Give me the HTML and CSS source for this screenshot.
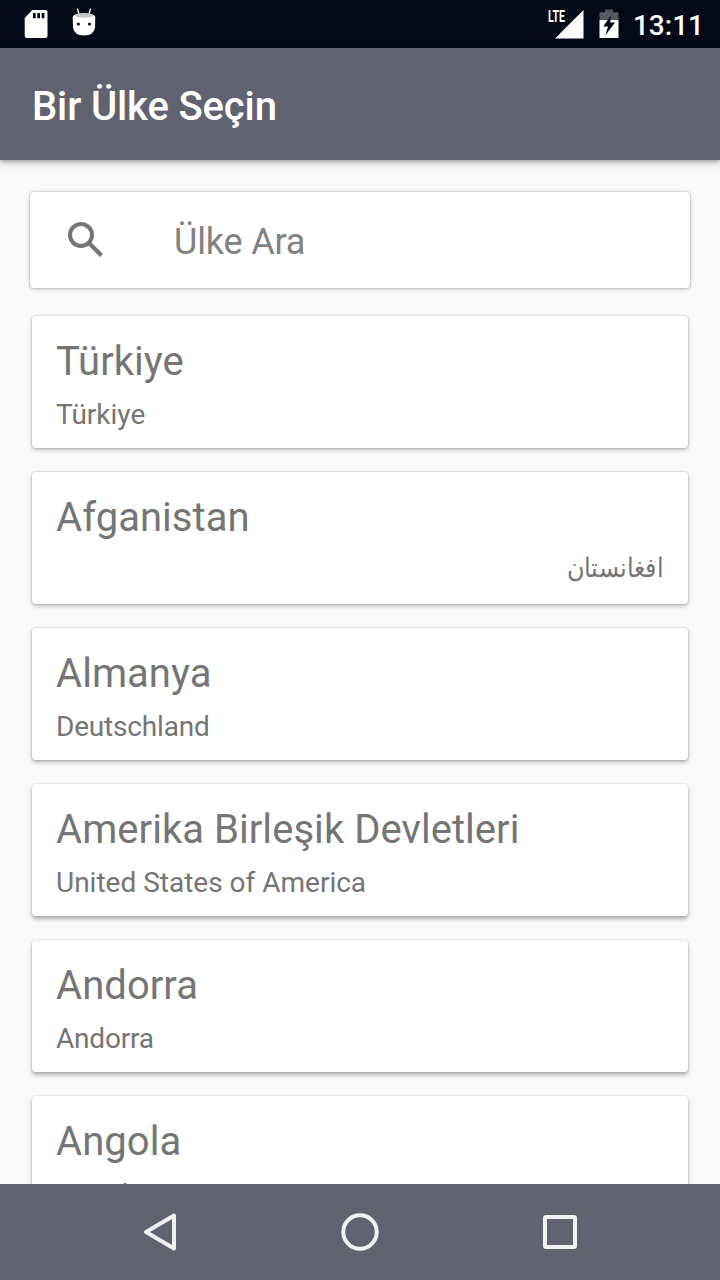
FILE: index.html
```html
<!DOCTYPE html>
<html lang="tr">
<head>
<meta charset="utf-8">
<title>Bir Ülke Seçin</title>
<link rel="stylesheet" href="styles.css">
</head>
<body>
<div class="screen">
  <div class="status">
    <svg class="sd" width="24" height="28" viewBox="0 0 24 28"><path fill="#fff" fill-rule="evenodd" d="M8.3 0H21.5a2 2 0 0 1 2 2V26a2 2 0 0 1-2 2H2.700a2 2 0 0 1-2-2V8ZM9 3V8.300h2.700V3ZM13.300 3V8.300H16V3ZM17.700 3V8.300h2.700V3Z"/></svg>
    <svg class="droid" width="24" height="28" viewBox="0 0 24 28"><path d="M5.500 1 7 6M18.500 1 17 6" stroke="#fff" stroke-width="1.300" stroke-linecap="round"/><path d="M.7 9Q1 5.500 12 5.500T23.300 9L23 20Q21.500 27.500 12 27.500T1 20Z" fill="#fff"/><path d="M2.500 7Q5 5 12 5T21.500 7Q20 9.700 12 9.700T2.500 7Z" fill="#c4c4c6"/><circle cx="6.400" cy="16" r="1.500" fill="#050816"/><circle cx="17.500" cy="16" r="1.500" fill="#050816"/></svg>
    <div class="spacer"></div>
    <div class="signal">
      <svg width="29" height="29" viewBox="0 0 29 29"><path d="M28.500 0V28.500H0Z" fill="#fff"/></svg>
      <span class="lte">LTE</span>
    </div>
    <svg class="battery" width="20" height="30" viewBox="0 0 20 30"><path d="M.5 11V4.500a1.300 1.300 0 0 1 1.300-1.300H6V.5H14V3.200h4.200a1.300 1.300 0 0 1 1.300 1.300V11Z" fill="#555761"/><path d="M.5 11H19.500V29H.5Z" fill="#fff"/><path d="M11.700 6.500 4.300 17.500H9L6.300 26.500 16 13.500H11.300Z" fill="#050816"/></svg>
    <span class="clock">13:11</span>
  </div>
  <div class="appbar"><h1 class="title">Bir Ülke Seçin</h1></div>
  <div class="content">
    <div class="search">
      <svg class="glass" width="36" height="36" viewBox="0 0 36 36" fill="none" stroke="#757575"><circle cx="13" cy="13" r="11" stroke-width="4"/><path d="M21.500 21.500 33.500 33.500" stroke-width="4.300"/></svg>
      <span class="hint">Ülke Ara</span>
    </div>
    <div class="list">
      <div class="card"><div class="name">Türkiye</div><div class="native">Türkiye</div></div>
      <div class="card"><div class="name">Afganistan</div><div class="native rtl" dir="rtl" lang="fa">افغانستان</div></div>
      <div class="card mid"><div class="name">Almanya</div><div class="native tight">Deutschland</div></div>
      <div class="card low"><div class="name">Amerika Birleşik Devletleri</div><div class="native">United States of America</div></div>
      <div class="card low"><div class="name">Andorra</div><div class="native tight">Andorra</div></div>
      <div class="card low"><div class="name">Angola</div><div class="native">Angola</div></div>
    </div>
  </div>
  <div class="navbar">
    <svg width="40" height="40" viewBox="0 0 40 40" class="nav"><path d="M34 3.500V36.500L6 20Z"/></svg>
    <svg width="40" height="40" viewBox="0 0 40 40" class="nav"><circle cx="20" cy="20" r="16.700"/></svg>
    <svg width="40" height="40" viewBox="0 0 40 40" class="nav"><rect x="5" y="5" width="30" height="30" rx="1"/></svg>
  </div>
</div>
</body>
</html>
```

FILE: styles.css
```css
* { box-sizing: border-box; }
body { margin: 0; background: #fafafa; font-family: Roboto, "Noto Sans", sans-serif; }
.screen { width: 720px; height: 1280px; display: flex; flex-direction: column; overflow: hidden; }
.status { height: 48px; flex: none; background: #050816; display: flex; align-items: flex-start; padding: 0 16px 0 24px; }
.sd { margin-top: 10px; }
.droid { margin: 8px 0 0 24px; }
.spacer { flex: 1; }
.signal { position: relative; margin: 10px 15px 0 0; height: 29px; }
.lte { position: absolute; left: -7px; top: -2px; font-size: 17px; line-height: 17px; font-weight: 700; color: #fff; transform: scaleX(.62); transform-origin: 0 0; }
.battery { margin: 9px 14px 0 0; }
.clock { color: #fff; font-size: 28px; line-height: 33px; font-weight: 500; margin-top: 9px; }
.appbar { height: 112px; flex: none; background: #61626f; padding: 0 32px; display: flex; align-items: center; box-shadow: 0 2px 5px rgba(0,0,0,.32), 0 4px 14px rgba(0,0,0,.08); position: relative; }
.title { margin: 6px 0 0; color: #fff; font-size: 40px; line-height: 48px; font-weight: 500; letter-spacing: -.14px; }
.content { flex: 1; min-height: 0; overflow: hidden; padding: 32px 32px 0; }
.search { height: 96px; margin: 0 -2px; background: #fff; border-radius: 4px; display: flex; align-items: center; padding: 0 38px; gap: 70px; box-shadow: 0 0 2px rgba(0,0,0,.3), 0 1px 4px rgba(0,0,0,.22); }
.glass { margin-top: -1px; }
.hint { color: #828282; font-size: 36px; line-height: 42px; margin-top: 4px; letter-spacing: -.16px; }
.list { display: flex; flex-direction: column; gap: 24px; margin-top: 28px; }
.card { height: 132px; flex: none; background: #fff; border-radius: 4px; padding: 22px 24px 0; color: #757575; box-shadow: 0 0 2px rgba(0,0,0,.25), 0 2px 4px rgba(0,0,0,.25); }
.mid { box-shadow: 0 0 2px rgba(0,0,0,.2), 0 2px 4px rgba(0,0,0,.3); }
.low { box-shadow: 0 0 2px rgba(0,0,0,.15), 0 3px 4px rgba(0,0,0,.3); }
.name { font-size: 40px; line-height: 48px; letter-spacing: .05px; }
.native { font-size: 28px; line-height: 34px; margin-top: 12px; }
.tight { letter-spacing: -.18px; }
.rtl { margin-top: 9px; font-size: 27px; transform: scaleX(.885); transform-origin: 100% 50%; }
.navbar { height: 96px; flex: none; background: #61626f; display: flex; justify-content: center; align-items: center; gap: 160px; position: relative; }
.nav { fill: none; stroke: #f1f1f1; stroke-width: 4; stroke-linejoin: round; }
```
